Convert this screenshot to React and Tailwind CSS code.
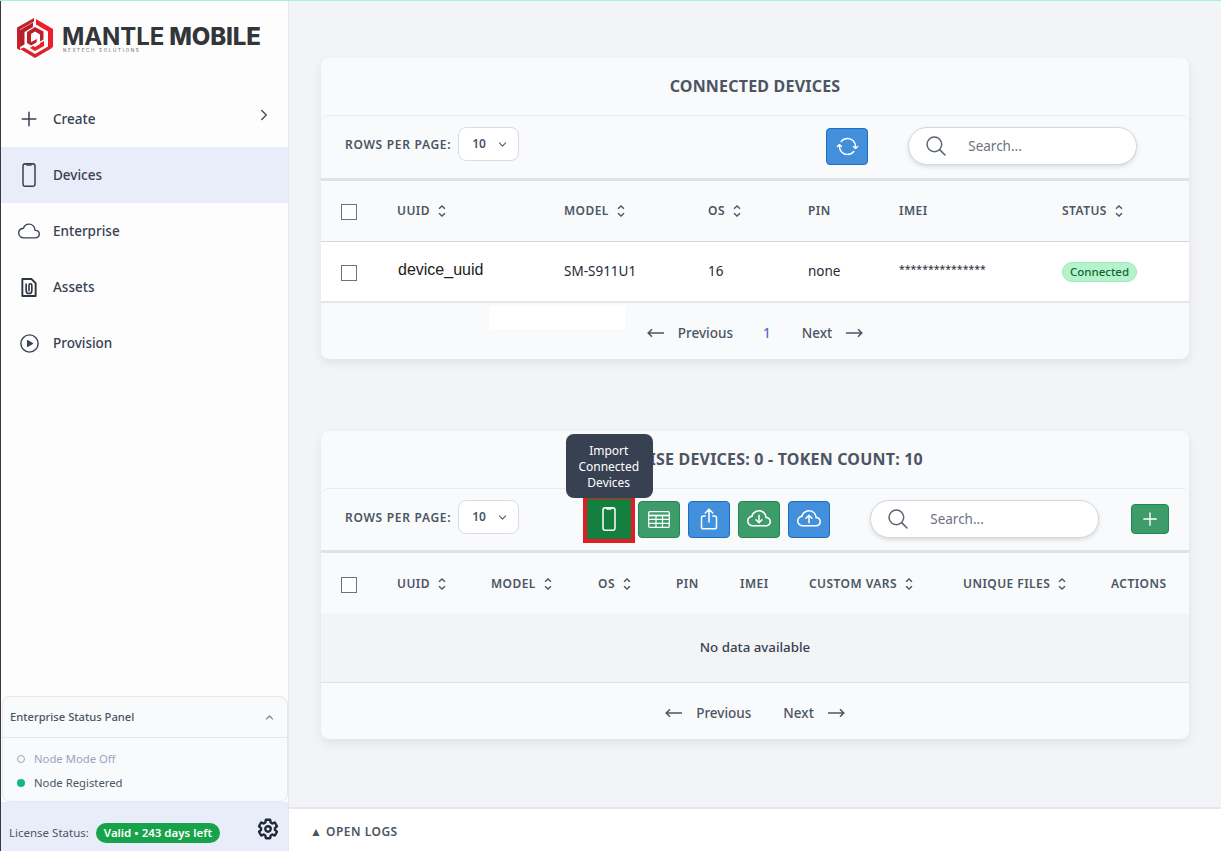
import React from "react";
import {
  IoAddOutline, IoChevronForward, IoChevronDown, IoChevronUp, IoPhonePortraitOutline, IoCloudOutline,
  IoPlayCircleOutline, IoSyncOutline, IoSearchOutline, IoShareOutline, IoSettingsOutline, IoAdd,
} from "react-icons/io5";
import { BsCloudArrowDown, BsCloudArrowUp } from "react-icons/bs";

function Sort() {
  return (
    <svg width="8" height="12" viewBox="0 0 8 12" fill="none" stroke="#4b5563" strokeWidth="1.4" className="ml-[8px] shrink-0">
      <path d="M1 3.8 4 1l3 2.8M1 8.2 4 11l3-2.8" />
    </svg>
  );
}

function Logo() {
  return (
    <svg width="36" height="41" viewBox="0 0 36 41">
      <path d="M17 0 0 9.500v21l3 1.700V11.500L17 3.500z" fill="#c4232b" />
      <path d="M3 12 16 4.600V9L7.500 14v12.500L3 29z" fill="#b3202a" />
      <path d="M19 1l17 10v18l-5 3V13.500L19 6.500z" fill="#ed1f2d" />
      <path d="M3 31l15 9 17-10-4-1.500-13 7.500-11-6.500z" fill="#d9222d" />
      <path d="M18 9 10 14v11l4 2.500 5.500-3 .5-3.500-6 3v-8l4-2.500 5 3v7l3.500-2V13.500z" fill="#c01f29" />
      <path d="M13 30l5 3 9-5v-5l-4 2v1l-5 3-2-1z" fill="#e3202c" />
    </svg>
  );
}

function AssetIcon() {
  return (
    <svg width="16" height="19" viewBox="0 0 16 20" fill="none" stroke="#2f3540" strokeWidth="2">
      <path d="M1 1h9.500L15 5.500V19H1z" strokeLinejoin="round" />
      <path d="M5 6.500v6.800a3 3 0 0 0 6 0V7.500a1.500 1.500 0 0 0-3 0v6" strokeLinecap="round" strokeWidth="1.700" />
    </svg>
  );
}

function TableIcon() {
  return (
    <svg width="22" height="17" viewBox="0 0 22 17" fill="none" stroke="#fff" strokeWidth="1.200">
      <rect x="0.700" y="0.700" width="20.600" height="15.600" rx="1" />
      <path d="M.7 4.500h20.600" strokeWidth="1.800" />
      <path d="M.7 8.300h20.600M.7 12.300h20.600M8 4.500v11.800M14.500 4.500v11.800" />
    </svg>
  );
}

function Arrow({ dir }) {
  return (
    <svg width="17" height="10" viewBox="0 0 17 10" fill="none" stroke="#4b5563" strokeWidth="1.500">
      {dir === "left" ? <path d="M17 5H1.200M5 1.200 1.200 5 5 8.800" /> : <path d="M0 5h15.800M12 1.200 15.800 5 12 8.800" />}
    </svg>
  );
}

function NavItem({ icon, label, active, arrow }) {
  return (
    <div className={`flex h-14 items-center ${active ? "bg-[#e9edfa]" : ""}`}>
      <div className="flex w-[52px] shrink-0 justify-center pl-[4px] text-[#3a4150]">
        <div className="flex w-[24px] justify-center">{icon}</div>
      </div>
      <span className="flex-1 text-[13.5px] font-medium text-[#374151]">{label}</span>
      {arrow && <IoChevronForward className="mr-[16px] mb-2 text-[16px] text-[#4b5563]" />}
    </div>
  );
}

function Sidebar() {
  return (
    <aside className="flex h-full w-[289px] shrink-0 flex-col border-r border-l border-r-[#e5e7f0] border-l-[#3a3a3a] bg-[#fdfdfe]">
      <div className="flex h-[90px] items-start pl-[16px] pt-[17px]">
        <Logo />
        <div className="ml-[9px] mt-[9px] flex flex-col">
          <div className="flex items-baseline gap-[5px] font-['Inter',sans-serif] text-[24px] leading-[19px] tracking-[-0.1px] text-[#333538]">
            <span className="font-bold">MANTLE</span>
            <span className="font-extrabold">MOBILE</span>
          </div>
          <div className="mt-[2px] whitespace-nowrap pl-[1px] font-['Inter',sans-serif] text-[4.5px] leading-[5px] tracking-[1.7px] text-[#666]">NEXTECH SOLUTIONS</div>
        </div>
      </div>
      <nav className="flex flex-col">
        <NavItem icon={<IoAddOutline className="text-[26px]" />} label="Create" arrow />
        <NavItem icon={<IoPhonePortraitOutline className="text-[24px]" />} label="Devices" active />
        <NavItem icon={<IoCloudOutline className="text-[22px]" />} label="Enterprise" />
        <NavItem icon={<AssetIcon />} label="Assets" />
        <NavItem icon={<IoPlayCircleOutline className="text-[23px]" />} label="Provision" />
      </nav>
      <div className="mt-auto ml-[1px] flex h-[106px] flex-col rounded-lg border border-[#e3e6ef] bg-[#f9fafc]">
        <div className="flex h-[41px] items-center justify-between border-b border-[#e3e6ef] pl-[7px] pr-[12px]">
          <span className="text-[11.2px] font-medium text-[#4b5563]">Enterprise Status Panel</span>
          <IoChevronUp className="text-[11px] text-[#6b7280]" />
        </div>
        <div className="flex items-center pl-[14px] pt-[11px] text-[11.3px] leading-[20px] text-[#9ca3c0]">
          <span className="mr-[9px] h-2 w-2 rounded-full border-[1.5px] border-[#9ca3b8]"></span>Node Mode Off
        </div>
        <div className="flex items-center pl-[14px] pt-[4px] text-[11.3px] leading-[20px] text-[#4b5563]">
          <span className="mr-[9px] h-2 w-2 rounded-full bg-[#10b981]"></span>Node Registered
        </div>
      </div>
      <div className="flex h-[49px] items-center bg-[#e9edfa] pl-[8px] pr-[9px] pt-[13px]">
        <span className="text-[11.5px] text-[#4b5563]">License Status:</span>
        <span className="ml-[7px] flex h-5 items-center rounded-full bg-[#16a34a] px-2 text-[11.5px] font-semibold text-white">Valid • 243 days left</span>
        <IoSettingsOutline className="mb-[8px] ml-auto text-[22px] text-[#1f2937] [&_*]:stroke-[56px]" />
      </div>
    </aside>
  );
}

function Check({ className = "" }) {
  return <div className={`h-4 w-4 border border-[#6b7280] bg-white ${className}`}></div>;
}

function Th({ children, sort }) {
  return (
    <div className="flex items-center text-[12px] font-semibold tracking-[0.45px] text-[#4b5563]">
      {children}
      {sort && <Sort />}
    </div>
  );
}

function RowsPerPage() {
  return (
    <div className="mb-[4px] flex items-center">
      <span className="pt-[2px] text-[12px] font-semibold tracking-[0.7px] text-[#4b5563]">ROWS PER PAGE:</span>
      <div className="ml-[7px] flex h-[34px] w-[61px] items-center rounded-lg border border-[#d9dce6] bg-white pl-[13px]">
        <span className="text-[12px] font-semibold text-[#4b5563]">10</span>
        <IoChevronDown className="ml-[11px] text-[11px] text-[#4b5563]" />
      </div>
    </div>
  );
}

function SearchBox() {
  return (
    <div className="flex h-[38px] w-[229px] items-center rounded-full border border-[#d4d6e0] bg-white pl-[15px] shadow-[0_2px_4px_rgba(0,0,0,0.12)]">
      <IoSearchOutline className="text-[24px] text-[#5b6472]" />
      <span className="ml-[20px] text-[13.5px] text-[#6b7280]">Search...</span>
    </div>
  );
}

function Btn({ color, children, className = "" }) {
  const c = color === "blue" ? "bg-[#428fdc] border-[#1a6fc4]" : color === "dark" ? "bg-[#14803f] border-[#14803f]" : "bg-[#3d9c6a] border-[#1f8a50]";
  return <div className={`flex items-center justify-center rounded-[4px] border text-white ${c} ${className}`}>{children}</div>;
}

function Pager({ page }) {
  return (
    <div className="flex items-center text-[13.5px] font-medium text-[#4b5563]">
      <Arrow dir="left" />
      <span className="ml-[14px]">Previous</span>
      {page && <span className="ml-[30px] text-[#4f6bd8]">1</span>}
      <span className={page ? "ml-[31px]" : "ml-[32px]"}>Next</span>
      <span className="ml-[14px] flex"><Arrow dir="right" /></span>
    </div>
  );
}

const title = "flex h-[57px] items-center justify-center pb-[2px] text-base font-bold tracking-[0.2px] text-[#4b5563]";
const toolbarBase = "flex items-center rounded-t-lg border-t border-b-[3px] border-t-[#e8eaf0] border-b-[#e0e2ea] pl-[24px]";

function ConnectedCard() {
  return (
    <section className="rounded-lg bg-[#f9fafc] shadow-[0_4px_10px_rgba(0,0,0,0.08)]">
      <div className={title}>CONNECTED DEVICES</div>
      <div className={`${toolbarBase} h-[66px] pb-[2px]`}>
        <RowsPerPage />
        <Btn color="blue" className="ml-[307px] h-[37px] w-[42px]"><IoSyncOutline className="text-[23px]" /></Btn>
        <div className="ml-[40px]"><SearchBox /></div>
      </div>
      <div className="grid h-[61px] grid-cols-[56px_167px_144px_100px_91px_163px_1fr] items-center border-b border-[#d4d6e0] pl-[20px]">
        <Check className="mt-[2px]" />
        <Th sort>UUID</Th>
        <Th sort>MODEL</Th>
        <Th sort>OS</Th>
        <Th>PIN</Th>
        <Th>IMEI</Th>
        <Th sort>STATUS</Th>
      </div>
      <div className="grid h-[61px] grid-cols-[56px_167px_144px_100px_91px_163px_1fr] items-center border-b-2 border-[#e3e5eb] bg-white pl-[20px] text-[13.5px] text-[#1f2937]">
        <Check className="mt-[3px]" />
        <span className="pl-[1px] pb-[3px] font-['Liberation_Sans',sans-serif] text-[16px] text-[#222]">device_uuid</span>
        <span>SM-S911U1</span>
        <span>16</span>
        <span>none</span>
        <span className="pb-[4px] text-[10.5px]">***************</span>
        <span className="flex h-5 w-[75px] items-center justify-center rounded-full border border-[#9fe8bd] bg-[#b4f4cc] text-[11.5px] font-medium text-[#166534]">Connected</span>
      </div>
      <div className="relative flex h-[56px] items-center justify-center pt-[4px]">
        <div className="absolute left-[168px] top-[3px] h-[23px] w-[136px] bg-white"></div>
        <Pager page />
      </div>
    </section>
  );
}

function EnterpriseCard() {
  return (
    <section className="rounded-lg bg-[#f9fafc] shadow-[0_4px_10px_rgba(0,0,0,0.08)]">
      <div className={`${title} pr-[10px]`}>ENTERPRISE DEVICES: 0 - TOKEN COUNT: 10</div>
      <div className={`${toolbarBase} h-[65px] pb-[1px]`}>
        <RowsPerPage />
        <div className="relative ml-[69px] h-[37px] w-[42px]">
          <div className="absolute -left-[5px] -right-[5px] -top-[6px] -bottom-[5px] border-4 border-[#e11d24] bg-[#14803f]"></div>
          <Btn color="dark" className="relative h-[37px] w-[42px]"><IoPhonePortraitOutline className="text-[24px]" /></Btn>
          <div className="absolute -top-[67px] left-[-22px] z-10 flex h-16 w-[87px] items-center justify-center rounded-lg bg-[#374151] pl-0 pr-[2px] pt-[2px] text-center text-[12px] leading-4 text-white">Import Connected Devices</div>
        </div>
        <Btn color="green" className="ml-[8px] h-[37px] w-[42px]"><TableIcon /></Btn>
        <Btn color="blue" className="ml-[8px] h-[37px] w-[42px]"><IoShareOutline className="text-[24px]" /></Btn>
        <Btn color="green" className="ml-[8px] h-[37px] w-[42px]"><BsCloudArrowDown className="text-[24px]" /></Btn>
        <Btn color="blue" className="ml-[8px] h-[37px] w-[42px]"><BsCloudArrowUp className="text-[24px]" /></Btn>
        <div className="ml-[40px]"><SearchBox /></div>
        <Btn color="green" className="ml-[32px] h-[30px] w-[38px]"><IoAdd className="text-[22px]" /></Btn>
      </div>
      <div className="grid h-[61px] grid-cols-[56px_94px_107px_78px_64px_69px_154px_148px_1fr] items-center pl-[20px]">
        <Check className="mt-[2px]" />
        <Th sort>UUID</Th>
        <Th sort>MODEL</Th>
        <Th sort>OS</Th>
        <Th>PIN</Th>
        <Th>IMEI</Th>
        <Th sort>CUSTOM VARS</Th>
        <Th sort>UNIQUE FILES</Th>
        <Th>ACTIONS</Th>
      </div>
      <div className="flex h-[69px] items-center justify-center border-b border-[#dfe1e8] bg-[#f3f4f6] text-[13.3px] font-medium text-[#374151]">No data available</div>
      <div className="flex h-[56px] items-center justify-center pt-[4px]">
        <Pager />
      </div>
    </section>
  );
}

export default function App() {
  return (
    <div className="flex h-[851px] flex-col overflow-hidden bg-[#f3f4f8] font-['Noto_Sans',sans-serif]">
      <div className="h-px shrink-0 bg-[#a7f3d0]"></div>
      <div className="flex min-h-0 flex-1">
        <Sidebar />
        <main className="flex min-w-0 flex-1 flex-col">
          <div className="flex flex-1 flex-col gap-[72px] px-[32px] pt-[57px]">
            <ConnectedCard />
            <EnterpriseCard />
          </div>
          <div className="flex h-[44px] items-center border-t-2 border-[#e5e7eb] bg-white pl-[21px] pt-[3px] text-[12px] font-semibold tracking-[0.5px] text-[#4b5563]">
            ▲ OPEN LOGS
          </div>
        </main>
      </div>
    </div>
  );
}
